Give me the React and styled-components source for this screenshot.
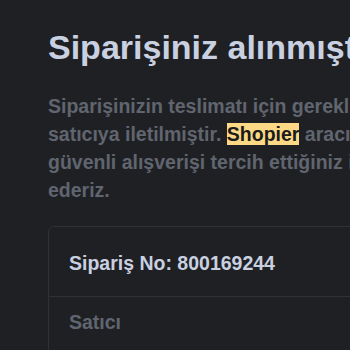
import styled, { createGlobalStyle } from "styled-components";

const Global = createGlobalStyle`
	html, body {
		margin: 0;
		background: #1f2023;
		font-family: "Liberation Sans", Arial, sans-serif;
	}
`;

const Page = styled.div`
	width: 350px;
	height: 350px;
	overflow: hidden;
	padding: 27px 0 0 48px;
	box-sizing: border-box;
`;

const Content = styled.div`
	width: 640px;
`;

const Title = styled.h1`
	margin: 0;
	font-size: 34px;
	font-weight: 700;
	line-height: 40px;
	color: #c9d1e1;
	white-space: nowrap;
`;

const Lead = styled.p`
	margin: 25px 0 0;
	font-size: 19.5px;
	font-weight: 700;
	line-height: 28px;
	color: #60656f;
	width: 425px;
`;

const Mark = styled.mark`
	background: #fdd985;
	color: #1b1b1b;
	padding: 0;
`;

const Card = styled.div`
	margin-top: 22px;
	border: 1px solid #2f3136;
	border-radius: 6px;
`;

const Row = styled.div`
	padding: ${(p) => p.$pad};
	font-size: 19.5px;
	font-weight: 700;
	line-height: 28px;
	color: ${(p) => (p.$muted ? "#60656f" : "#c9d1e1")};
	border-top: ${(p) => (p.$divided ? "1px solid #2f3136" : "none")};
`;

export default function App() {
	return (
		<Page>
			<Global />
			<Content>
				<Title>Siparişiniz alınmıştır</Title>
				<Lead>
					Siparişinizin teslimatı için gerekli bilgiler satıcıya iletilmiştir.{" "}
					<Mark>Shopier</Mark> aracılığıyla güvenli alışverişi tercih ettiğiniz
					için teşekkür ederiz.
				</Lead>
				<Card>
					<Row $pad="22px 20px 19px">Sipariş No: 800169244</Row>
					<Row $pad="11px 20px 20px" $divided $muted>
						Satıcı
					</Row>
				</Card>
			</Content>
		</Page>
	);
}
